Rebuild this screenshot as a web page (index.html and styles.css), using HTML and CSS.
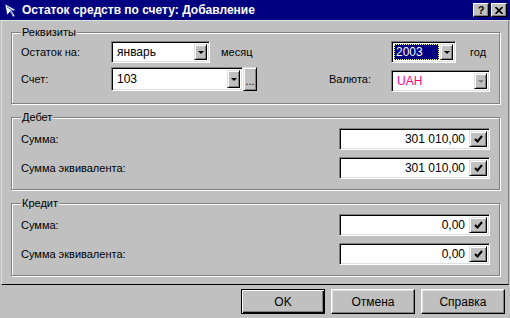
FILE: index.html
```html
<!DOCTYPE html>
<html lang="ru">
  <head>
    <meta charset="UTF-8" />
    <title>Остаток средств по счету: Добавление</title>
    <link rel="stylesheet" href="styles.css">
  </head>
  <body>
    <div class="window">
      <div class="titlebar">
        <svg class="app-icon" width="16" height="16" viewBox="0 0 16 16">
          <path d="M2 2 L13 8 L9 9 L12 14 L10 15 L7 10 L4 13 Z" fill="#fff" stroke="#000080" stroke-width="0.6"/>
          <path d="M4 5 L10 8.5 L7.5 9 L9.5 13" fill="none" stroke="#4060c0" stroke-width="1"/>
        </svg>
        <span class="title">Остаток средств по счету: Добавление</span>
        <span class="tbtn help">?</span>
        <span class="tbtn close">
          <svg width="8" height="7" viewBox="0 0 8 7">
            <path d="M0.5 0 L7.5 7 M7.5 0 L0.5 7" stroke="#000" stroke-width="1.6"/>
          </svg>
        </span>
      </div>

      <div class="panel">
        <fieldset class="group requisites">
          <legend>Реквизиты</legend>
          <div class="row">
            <span class="label">Остаток на:</span>
            <div class="combo month">
              <span class="val">январь</span>
              <span class="drop"><i class="arrow"></i></span>
            </div>
            <span class="unit month-unit">месяц</span>
            <div class="combo year">
              <span class="val selected">2003</span>
              <span class="drop"><i class="arrow"></i></span>
            </div>
            <span class="unit year-unit">год</span>
          </div>
          <div class="row second">
            <span class="label">Счет:</span>
            <div class="combo account">
              <span class="val">103</span>
              <span class="drop"><i class="arrow"></i></span>
            </div>
            <span class="dots">...</span>
            <span class="label currency-label">Валюта:</span>
            <div class="combo currency">
              <span class="val pink">UAH</span>
              <span class="drop"><i class="arrow off"></i></span>
            </div>
          </div>
        </fieldset>

        <fieldset class="group sums">
          <legend>Дебет</legend>
          <div class="row">
            <span class="label">Сумма:</span>
            <div class="edit">
              <span class="num">301 010,00</span>
              <span class="check"><svg width="9" height="8" viewBox="0 0 9 8"><path d="M1 4 L3.5 6.5 L8 1" fill="none" stroke="#000" stroke-width="2"/></svg></span>
            </div>
          </div>
          <div class="row">
            <span class="label">Сумма эквивалента:</span>
            <div class="edit">
              <span class="num">301 010,00</span>
              <span class="check"><svg width="9" height="8" viewBox="0 0 9 8"><path d="M1 4 L3.5 6.5 L8 1" fill="none" stroke="#000" stroke-width="2"/></svg></span>
            </div>
          </div>
        </fieldset>

        <fieldset class="group sums">
          <legend>Кредит</legend>
          <div class="row">
            <span class="label">Сумма:</span>
            <div class="edit">
              <span class="num">0,00</span>
              <span class="check"><svg width="9" height="8" viewBox="0 0 9 8"><path d="M1 4 L3.5 6.5 L8 1" fill="none" stroke="#000" stroke-width="2"/></svg></span>
            </div>
          </div>
          <div class="row">
            <span class="label">Сумма эквивалента:</span>
            <div class="edit">
              <span class="num">0,00</span>
              <span class="check"><svg width="9" height="8" viewBox="0 0 9 8"><path d="M1 4 L3.5 6.5 L8 1" fill="none" stroke="#000" stroke-width="2"/></svg></span>
            </div>
          </div>
        </fieldset>
      </div>

      <div class="buttons">
        <button class="btn default">OK</button>
        <button class="btn">Отмена</button>
        <button class="btn">Справка</button>
      </div>
    </div>
  </body>
</html>
```

FILE: styles.css
```css
* {
  box-sizing: border-box;
}

body {
  margin: 0;
  background: #c0c0c0;
  font-family: "Liberation Sans", Arial, sans-serif;
  font-size: 11px;
  color: #000;
}

.window {
  width: 510px;
  height: 318px;
  background: #c0c0c0;
}

/* заголовок окна */
.titlebar {
  height: 20px;
  background: #000080;
  color: #fff;
  display: flex;
  align-items: center;
  padding: 0 3px 0 3px;
}

.app-icon {
  margin-right: 3px;
  flex: none;
}

.title {
  flex: 1;
  font-weight: bold;
  font-size: 12px;
  white-space: nowrap;
}

.tbtn {
  width: 16px;
  height: 14px;
  background: #c0c0c0;
  color: #000;
  font-weight: bold;
  font-size: 11px;
  display: flex;
  align-items: center;
  justify-content: center;
  border: 1px solid;
  border-color: #fff #000 #000 #fff;
  box-shadow: inset -1px -1px 0 #808080;
}

.tbtn.close {
  margin-left: 2px;
}

/* основная панель */
.panel {
  height: 265px;
  margin: 0 1px;
  border-top: 1px solid #dfdfdf;
  border-left: 1px solid #dfdfdf;
  border-bottom: 1px solid #000;
  border-right: 1px solid #808080;
  padding-top: 5px;
}

.group {
  width: 489px;
  margin: 0 0 7px 9px;
  padding: 3px 0 10px 9px;
  border: 1px solid #808080;
  box-shadow: inset 1px 1px 0 #fff, 1px 1px 0 #fff;
}

.group legend {
  padding: 0 1px;
  margin-left: 0;
  line-height: 12px;
  background: #c0c0c0;
}

.row {
  display: flex;
  align-items: center;
  height: 22px;
}

.row.second {
  margin-top: 4px;
  align-items: flex-start;
  height: 26px;
}

.label {
  width: 90px;
  flex: none;
}

.second .label {
  line-height: 24px;
}

.unit.month-unit {
  width: 181px;
  padding-left: 11px;
}

.unit.year-unit {
  padding-left: 14px;
}

.currency-label {
  width: 62px;
  margin-left: 72px;
}

/* комбобоксы и поля ввода */
.combo,
.edit {
  height: 22px;
  background: #fff;
  display: flex;
  align-items: stretch;
  padding: 2px;
  border: 1px solid;
  border-color: #808080 #fff #fff #808080;
  box-shadow: inset 1px 1px 0 #000, inset -1px -1px 0 #dfdfdf;
}

.combo .val {
  flex: 1;
  padding-left: 3px;
  line-height: 17px;
  font-size: 12px;
}

.month {
  width: 99px;
}

.year {
  width: 65px;
}

.account {
  width: 132px;
  height: 24px;
}

.account .val {
  line-height: 19px;
}

.currency {
  width: 99px;
  margin-top: 3px;
}

.val.selected {
  background: #000080;
  color: #fff;
  outline: 1px dotted #ffff80;
  outline-offset: -1px;
  padding-left: 2px;
  margin-right: 1px;
}

.val.pink {
  color: #ff0080;
}

.drop,
.check,
.dots {
  background: #c0c0c0;
  border: 1px solid;
  border-color: #dfdfdf #000 #000 #dfdfdf;
  box-shadow: inset 1px 1px 0 #fff, inset -1px -1px 0 #808080;
  display: flex;
  align-items: center;
  justify-content: center;
}

.drop {
  width: 13px;
  flex: none;
}

.arrow {
  width: 0;
  height: 0;
  border-left: 3px solid transparent;
  border-right: 3px solid transparent;
  border-top: 3px solid #000;
}

.arrow.off {
  border-top-color: #808080;
}

.dots {
  width: 14px;
  height: 24px;
  align-items: flex-end;
  padding-bottom: 5px;
  line-height: 8px;
  font-size: 11px;
}

.sums .row + .row {
  margin-top: 7px;
}

.sums {
  padding-top: 5px;
}

.sums .label {
  width: 318px;
}

.edit {
  width: 151px;
}

.edit .num {
  flex: 1;
  text-align: right;
  padding-right: 4px;
  line-height: 17px;
  font-size: 12px;
}

.check {
  width: 18px;
  flex: none;
}

/* кнопки */
.buttons {
  display: flex;
  justify-content: flex-end;
  padding: 4px 5px 0 0;
  gap: 6px;
}

.btn {
  width: 84px;
  height: 25px;
  margin: 0;
  padding: 0;
  font-family: "Liberation Sans", Arial, sans-serif;
  font-size: 12px;
  color: #000;
  background: #c0c0c0;
  border: 1px solid;
  border-color: #fff #000 #000 #fff;
  box-shadow: inset -1px -1px 0 #808080, inset 1px 1px 0 #dfdfdf;
}

.btn.default {
  border: 1px solid #000;
  box-shadow: inset 1px 1px 0 #fff, inset -1px -1px 0 #000, inset -2px -2px 0 #808080;
}
```
